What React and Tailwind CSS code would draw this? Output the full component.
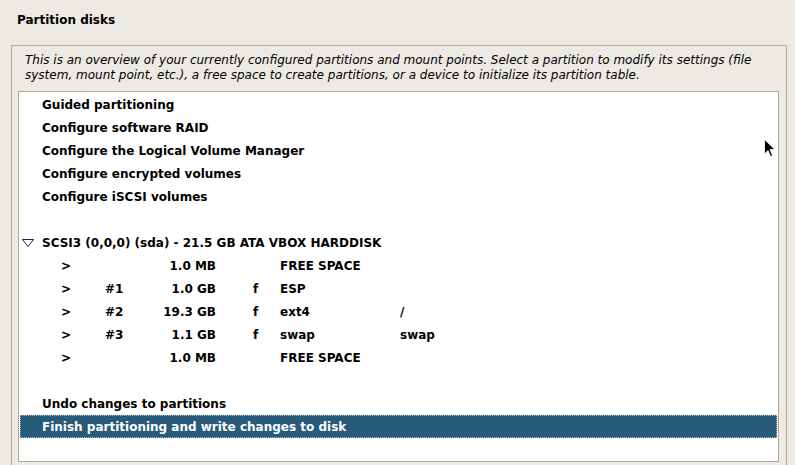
import React from 'react'

const menuTop = [
  'Guided partitioning',
  'Configure software RAID',
  'Configure the Logical Volume Manager',
  'Configure encrypted volumes',
  'Configure iSCSI volumes',
]

const partitions = [
  { num: '', size: '1.0 MB', fmt: '', type: 'FREE SPACE', mount: '' },
  { num: '#1', size: '1.0 GB', fmt: 'f', type: 'ESP', mount: '' },
  { num: '#2', size: '19.3 GB', fmt: 'f', type: 'ext4', mount: '/' },
  { num: '#3', size: '1.1 GB', fmt: 'f', type: 'swap', mount: 'swap' },
  { num: '', size: '1.0 MB', fmt: '', type: 'FREE SPACE', mount: '' },
]

const Row = ({ children, selected }) => (
  <div
    className={`flex h-[23px] items-center ${
      selected ? 'mx-px border border-dotted border-[#9fb8c8] bg-[#275b79] text-white' : 'text-black'
    }`}
  >
    {children}
  </div>
)

export default function App() {
  return (
    <div
      className="relative h-[465px] w-[795px] overflow-hidden bg-[#edeae4] text-[12px]"
      style={{ fontFamily: '"DejaVu Sans", sans-serif' }}
    >
      <div className="pl-[17px] pt-[12px] font-bold leading-[16px] text-black">Partition disks</div>

      <div className="ml-[11px] mt-[17px] h-[440px] w-[776px] border border-[#b5aa95] px-[6px]">
        <p className="pl-[7px] pt-[7px] italic leading-[15px] text-black">
          This is an overview of your currently configured partitions and mount points. Select a partition to modify its settings (file
          system, mount point, etc.), a free space to create partitions, or a device to initialize its partition table.
        </p>

        <div className="mt-[8px] h-[371px] w-[761px] border border-[#b5aa95] bg-white pt-px font-bold">
          {menuTop.map((t) => (
            <Row key={t}>
              <span className="pl-[23px]">{t}</span>
            </Row>
          ))}
          <div className="h-[23px]" />
          <Row>
            <svg className="ml-[3px] mr-[8px]" width="12" height="8" viewBox="0 0 12 8">
              <path d="M0.5 0.5 H11.5 L6 7.5 Z" fill="none" stroke="#222" strokeWidth="1" />
            </svg>
            <span>SCSI3 (0,0,0) (sda) - 21.5 GB ATA VBOX HARDDISK</span>
          </Row>
          {partitions.map((p, i) => (
            <Row key={i}>
              <span className="w-[86px] shrink-0 pl-[42px]">&gt;</span>
              <span className="w-[40px] shrink-0">{p.num}</span>
              <span className="w-[71px] shrink-0 text-right">{p.size}</span>
              <span className="w-[64px] shrink-0 pl-[37px]">{p.fmt}</span>
              <span className="w-[120px] shrink-0">{p.type}</span>
              <span>{p.mount}</span>
            </Row>
          ))}
          <div className="h-[23px]" />
          <Row>
            <span className="pl-[23px]">Undo changes to partitions</span>
          </Row>
          <Row selected>
            <span className="pl-[21px]">Finish partitioning and write changes to disk</span>
          </Row>
        </div>
      </div>

      <svg className="absolute left-[764px] top-[139px]" width="12" height="19" viewBox="0 0 12 19">
        <path d="M0.5 0.5 V15 L4 11.5 L6.5 17.5 L8.5 16.5 L6 10.5 H11 Z" fill="#000" stroke="#fff" strokeWidth="0.8" />
      </svg>
    </div>
  )
}
